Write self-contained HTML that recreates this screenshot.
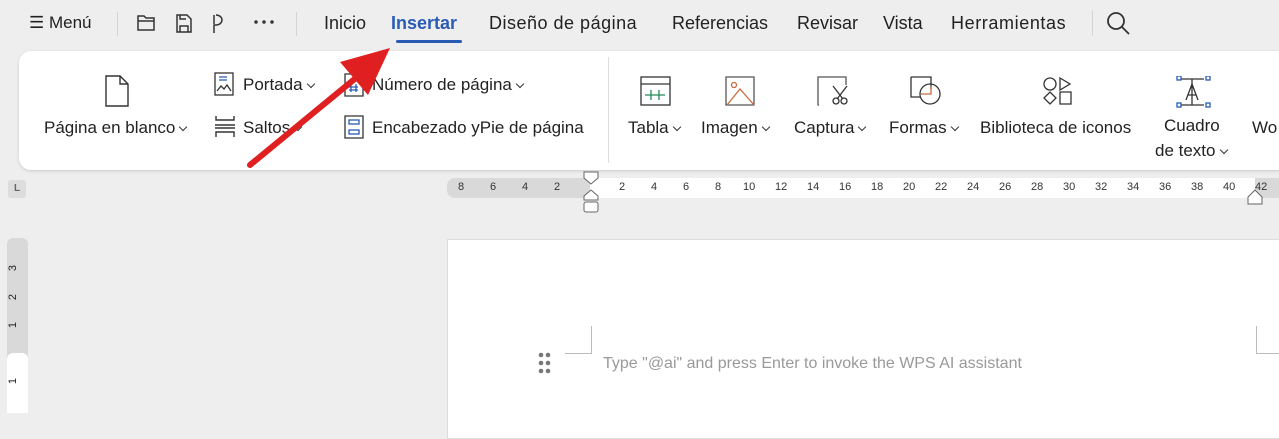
<!DOCTYPE html>
<html><head><meta charset="utf-8"><style>
*{margin:0;padding:0;box-sizing:border-box}
body{width:1279px;height:408px;background:#eeeeee;font-family:"Liberation Sans",sans-serif;color:#222;position:relative;overflow:hidden}
.a{position:absolute;white-space:nowrap}
.t{font-size:18px}
.s{font-size:17px}
.ch{display:inline-block;width:6px;height:6px;border-right:1.5px solid #333;border-bottom:1.5px solid #333;transform:rotate(45deg);margin:0 0 4px 5px;vertical-align:middle}
</style></head><body>
<div class="a s" style="left:29px;top:13px">☰&nbsp;Menú</div>
<div class="a" style="left:117px;top:12px;width:1px;height:24px;background:#d4d4d4"></div>
<svg class="a" style="left:136px;top:12px" width="140" height="22" fill="none" stroke="#333" stroke-width="1.5">
<path d="M2 4h6l2 2h8v12H2z M2 9h16"/>
<path d="M41 3h10l4 4v13H41z M44 20v-6h8v6 M44 3v4h6"/>
<path d="M80 3a6 5 0 1 1 0 10h-2v8 M78 3v9"/>
<circle cx="120" cy="10" r="1" fill="#333"/><circle cx="128" cy="10" r="1" fill="#333"/><circle cx="136" cy="10" r="1" fill="#333"/>
</svg>
<div class="a" style="left:296px;top:12px;width:1px;height:24px;background:#d4d4d4"></div>
<div class="a t" style="left:324px;top:13px">Inicio</div>
<div class="a t" style="left:391px;top:13px;color:#2a5bb5;font-weight:bold">Insertar</div>
<div class="a" style="left:396px;top:40px;width:66px;height:3px;background:#2a5bb5;border-radius:2px"></div>
<div class="a t" style="left:489px;top:13px;letter-spacing:0.5px">Diseño de página</div>
<div class="a t" style="left:672px;top:13px">Referencias</div>
<div class="a t" style="left:797px;top:13px">Revisar</div>
<div class="a t" style="left:883px;top:13px">Vista</div>
<div class="a t" style="left:951px;top:13px;letter-spacing:0.6px">Herramientas</div>
<div class="a" style="left:1092px;top:10px;width:1px;height:26px;background:#d4d4d4"></div>
<svg class="a" style="left:1106px;top:11px" width="26" height="26" fill="none" stroke="#333" stroke-width="1.8"><circle cx="10" cy="10" r="8"/><path d="M16 16l7 7"/></svg>
<div class="a" style="left:19px;top:51px;width:1280px;height:119px;background:#fff;border-radius:12px;box-shadow:0 1px 3px rgba(0,0,0,.15)"></div>
<svg class="a" style="left:100px;top:74px" width="40" height="34" fill="none" stroke="#333" stroke-width="1.4"><path d="M6 2h14l8 8v22H6z M20 2v8h8"/></svg>
<div class="a s" style="left:44px;top:118px">Página en blanco<span class="ch"></span></div>
<svg class="a" style="left:213px;top:72px" width="24" height="24" fill="none" stroke="#333" stroke-width="1.3"><rect x="2" y="1" width="18" height="22"/><path d="M6 5h8M6 8h8" stroke="#2a5bb5"/><path d="M4 19l4-5 3 3 3-4 4 6"/></svg>
<div class="a s" style="left:243px;top:75px">Portada<span class="ch"></span></div>
<svg class="a" style="left:213px;top:114px" width="24" height="24" fill="none" stroke="#333" stroke-width="1.4"><path d="M3 2v4h18V2 M2 11h20M2 14h20 M3 23v-5h18v5"/></svg>
<div class="a s" style="left:243px;top:118px">Saltos<span class="ch"></span></div>
<svg class="a" style="left:342px;top:72px" width="24" height="26" fill="none" stroke="#333" stroke-width="1.3"><path d="M3 2h18v22H3z"/><path d="M9 12v8M14 12v8M7 15h9M7 18h9" stroke="#2a5bb5"/></svg>
<div class="a s" style="left:372px;top:75px">Número de página<span class="ch"></span></div>
<svg class="a" style="left:342px;top:114px" width="24" height="26" fill="none" stroke="#333" stroke-width="1.3"><path d="M3 2h18v22H3z"/><rect x="7" y="6" width="10" height="4" stroke="#2a5bb5"/><rect x="7" y="16" width="10" height="4" stroke="#2a5bb5"/></svg>
<div class="a s" style="left:372px;top:118px">Encabezado yPie de página</div>
<div class="a" style="left:608px;top:57px;width:1px;height:106px;background:#ddd"></div>
<svg class="a" style="left:640px;top:76px" width="600" height="32" fill="none" stroke="#333" stroke-width="1.3">
<rect x="1" y="1" width="29" height="28"/><path d="M1 8h29"/><path d="M5 19h20M11 14v10M19 14v10" stroke="#1e8a5a"/>
<path d="M86 1h28v28H86z" stroke="#555"/><circle cx="94" cy="9" r="2.5" stroke="#c86a3c"/><path d="M87 29l13-16 14 16" stroke="#c86a3c"/>
<path d="M179 29h-1V1h28v8" stroke="#555"/><circle cx="196" cy="25" r="3"/><circle cx="204" cy="25" r="3"/><path d="M193 10l10 13M207 10l-10 13"/>
<path d="M271 1h20v12M271 1v20h10"/><circle cx="290" cy="18" r="10"/><path d="M281 18h10v-8" stroke="#c86a3c"/>
<circle cx="410" cy="8" r="6"/><path d="M420 2l10 6-10 6z M404 22l6-6 6 6-6 6z M420 16h11v12h-11z"/>
<path d="M541 3h23M552 3v26M541 29h23 M546 24l6-16 6 16 M548 19h8"/><rect x="537" y="0" width="4" height="4" stroke="#2a5bb5"/><rect x="566" y="0" width="4" height="4" stroke="#2a5bb5"/><rect x="537" y="27" width="4" height="4" stroke="#2a5bb5"/><rect x="566" y="27" width="4" height="4" stroke="#2a5bb5"/>
</svg>
<div class="a s" style="left:628px;top:118px">Tabla<span class="ch"></span></div>
<div class="a s" style="left:701px;top:118px">Imagen<span class="ch"></span></div>
<div class="a s" style="left:794px;top:118px">Captura<span class="ch"></span></div>
<div class="a s" style="left:889px;top:118px">Formas<span class="ch"></span></div>
<div class="a s" style="left:980px;top:118px">Biblioteca de iconos</div>
<div class="a s" style="left:1164px;top:116px">Cuadro</div>
<div class="a s" style="left:1155px;top:141px">de texto<span class="ch"></span></div>
<div class="a s" style="left:1252px;top:118px">Wo</div>
<svg class="a" style="left:240px;top:40px" width="160" height="135"><path d="M10 125L128 28" stroke="#e02020" stroke-width="6" stroke-linecap="round"/><path d="M150 8L100 22 128 55z" fill="#e02020"/></svg>
<div class="a" style="left:8px;top:180px;width:18px;height:18px;background:#ddd;border-radius:3px;font-size:10px;font-weight:bold;color:#666;text-align:center;line-height:18px">L</div>
<div class="a" style="left:447px;top:178px;width:850px;height:20px;background:#d9d9d9;border-radius:8px 0 0 8px"></div>
<div class="a" style="left:590px;top:178px;width:665px;height:20px;background:#fff"></div>
<div class="a" id="r" style="left:0;top:181px;font-size:11px;color:#333"></div>
<svg class="a" style="left:581px;top:170px" width="20" height="45" fill="#fff" stroke="#666" stroke-width="1"><path d="M3 2h14v6l-7 6-7-6z"/><path d="M10 20l7 6v4H3v-4z"/><rect x="3" y="32" width="14" height="10" rx="2"/></svg>
<svg class="a" style="left:1246px;top:188px" width="18" height="18" fill="#fff" stroke="#666"><path d="M9 2l7 7v7H2V9z"/></svg>
<div class="a" style="left:7px;top:238px;width:21px;height:170px;background:#d9d9d9;border-radius:6px 6px 0 0"></div>
<div class="a" style="left:7px;top:353px;width:21px;height:60px;background:#fff;border-radius:6px 6px 0 0"></div>
<div class="a" style="left:10px;top:262px;font-size:11px;transform:rotate(-90deg)">3</div>
<div class="a" style="left:10px;top:291px;font-size:11px;transform:rotate(-90deg)">2</div>
<div class="a" style="left:10px;top:319px;font-size:11px;transform:rotate(-90deg)">1</div>
<div class="a" style="left:10px;top:375px;font-size:11px;transform:rotate(-90deg)">1</div>
<div class="a" style="left:447px;top:239px;width:840px;height:200px;background:#fff;border:1px solid #ddd"></div>
<div class="a" style="left:565px;top:326px;width:27px;height:28px;border-right:1px solid #bbb;border-bottom:1px solid #bbb"></div>
<div class="a" style="left:1256px;top:326px;width:30px;height:28px;border-left:1px solid #bbb;border-bottom:1px solid #bbb"></div>
<svg class="a" style="left:538px;top:352px" width="14" height="24" fill="#777"><circle cx="3" cy="3" r="2.3"/><circle cx="10" cy="3" r="2.3"/><circle cx="3" cy="11" r="2.3"/><circle cx="10" cy="11" r="2.3"/><circle cx="3" cy="19" r="2.3"/><circle cx="10" cy="19" r="2.3"/></svg>
<div class="a" style="left:603px;top:355px;font-size:16px;color:#999">Type "@ai" and press Enter to invoke the WPS AI assistant</div>
<script>
var r=document.getElementById('r'),h='';
[[8,462],[6,494],[4,526],[2,558]].forEach(function(p){h+='<span style="position:absolute;left:'+(p[1]-4)+'px">'+p[0]+'</span>'});
for(var i=2;i<=42;i+=2){var x=622+(i-2)*16;h+='<span style="position:absolute;left:'+(x-(i<10?3:7))+'px">'+i+'</span>'}
r.innerHTML=h;
</script>
</body></html>
